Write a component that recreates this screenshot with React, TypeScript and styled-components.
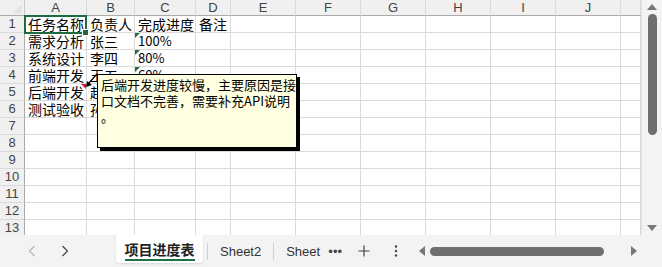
import React from "react";
import styled, { createGlobalStyle } from "styled-components";

const GlobalStyle = createGlobalStyle`
  html, body {
    margin: 0;
    padding: 0;
    background: #ffffff;
  }
  body {
    font-family: "Liberation Sans", "Noto Sans CJK SC", sans-serif;
  }
`;

const COLS = ["A", "B", "C", "D", "E", "F", "G", "H", "I", "J", ""];
const WIDTHS = [25, 62, 48, 61, 35, 65, 65, 65, 65, 65, 65, 20];

const ROWS: string[][] = [
  ["任务名称", "负责人", "完成进度", "备注"],
  ["需求分析", "张三", "100%"],
  ["系统设计", "李四", "80%"],
  ["前端开发", "王五", "60%"],
  ["后端开发", "赵六", "40%"],
  ["测试验收", "孙七", "0%"],
];

const Page = styled.div`
  width: 662px;
  height: 267px;
  display: flex;
  flex-direction: column;
  overflow: hidden;
  background: #f3f3f3;
`;

const Main = styled.div`
  display: flex;
  height: 235px;
  background: #fff;
`;

const SheetWrap = styled.div`
  position: relative;
  width: 641px;
  height: 235px;
  overflow: hidden;
`;

const Sheet = styled.div`
  display: grid;
  grid-template-columns: ${WIDTHS.slice(0, 11).map((w) => w + "px").join(" ")} 20px;
  grid-template-rows: 16px repeat(13, 17px);
`;

const Corner = styled.div`
  position: relative;
  background: #f0f0f0;
  border-right: 1px solid #c8c8c8;
  border-bottom: 1px solid #aaaaaa;
  box-sizing: border-box;

  &::after {
    content: "";
    position: absolute;
    right: 2px;
    bottom: 2px;
    border-left: 9px solid transparent;
    border-bottom: 9px solid #e2e2e2;
  }
`;

const ColHead = styled.div`
  background: #f0f0f0;
  border-right: 1px solid #dadada;
  border-bottom: 1px solid #aaaaaa;
  box-sizing: border-box;
  font-size: 13px;
  line-height: 15px;
  color: #444;
  text-align: center;
`;

const RowHead = styled.div`
  background: #f0f0f0;
  border-right: 1px solid #aaaaaa;
  border-bottom: 1px solid #dadada;
  box-sizing: border-box;
  font-size: 13px;
  line-height: 16px;
  color: #444;
  text-align: center;
`;

const Cell = styled.div<{ $num?: boolean }>`
  position: relative;
  border-right: 1px solid #dadada;
  border-bottom: 1px solid #dadada;
  box-sizing: border-box;
  padding-left: 3px;
  white-space: nowrap;
  overflow: visible;
  font-family: "Noto Sans CJK SC", "Liberation Sans", sans-serif;
  font-size: ${(p) => (p.$num ? "13px" : "14px")};
  line-height: 16px;
  color: #000;
  background: #fff;
`;

const NumberFlag = styled.span`
  position: absolute;
  left: 0;
  top: 0;
  border-top: 5px solid #1e7145;
  border-right: 5px solid transparent;
`;

const CommentFlag = styled.span`
  position: absolute;
  right: 0;
  top: 0;
  border-top: 5px solid #e01b1b;
  border-left: 5px solid transparent;
`;

const Selection = styled.div`
  position: absolute;
  left: 24px;
  top: 15px;
  width: 63px;
  height: 19px;
  border: 2px solid #1e6b41;
  box-sizing: border-box;
  pointer-events: none;

  &::after {
    content: "";
    position: absolute;
    right: -4px;
    bottom: -4px;
    width: 5px;
    height: 5px;
    background: #1e6b41;
    border: 1px solid #fff;
  }
`;

const Comment = styled.div`
  position: absolute;
  left: 97px;
  top: 74px;
  width: 200px;
  height: 74px;
  box-sizing: border-box;
  padding: 2px 0 0 3px;
  background: #ffffe1;
  border: 1px solid #000;
  box-shadow: 3px 3px 0 #000;
  font-family: "Noto Sans CJK SC", sans-serif;
  font-size: 13px;
  line-height: 16px;
  color: #000;
  white-space: nowrap;
`;

const Pointer = styled.svg`
  position: absolute;
  left: 84px;
  top: 72px;
  overflow: visible;
`;

const VScroll = styled.div`
  width: 21px;
  display: flex;
  flex-direction: column;
  align-items: center;
  background: #f3f3f3;
  border-left: 1px solid #e4e4e4;
  box-sizing: border-box;
  padding: 4px 0 4px;
`;

const Arrow = styled.span<{ $dir: "up" | "down" | "left" | "right" }>`
  display: block;
  width: 0;
  height: 0;
  ${(p) =>
    p.$dir === "up"
      ? "border-left: 5px solid transparent; border-right: 5px solid transparent; border-bottom: 6px solid #777;"
      : p.$dir === "down"
      ? "border-left: 5px solid transparent; border-right: 5px solid transparent; border-top: 6px solid #777;"
      : p.$dir === "left"
      ? "border-top: 5px solid transparent; border-bottom: 5px solid transparent; border-right: 6px solid #777;"
      : "border-top: 5px solid transparent; border-bottom: 5px solid transparent; border-left: 6px solid #777;"}
`;

const VThumb = styled.div`
  width: 9px;
  height: 121px;
  margin-top: 4px;
  border-radius: 5px;
  background: #6e6e6e;
`;

const Spacer = styled.div`
  flex: 1;
`;

const TabBar = styled.div`
  height: 32px;
  display: flex;
  align-items: center;
  background: #f3f3f3;
  font-family: "Liberation Sans", "Noto Sans CJK SC", sans-serif;
  font-size: 13px;
  color: #333;
`;

const NavBtn = styled.span`
  width: 33px;
  display: flex;
  justify-content: center;
`;

const NavGroup = styled.div`
  display: flex;
  padding-left: 15px;
  width: 101px;
`;

const ActiveTab = styled.div`
  align-self: flex-start;
  height: 28px;
  width: 87px;
  box-sizing: border-box;
  background: #fff;
  border-radius: 0 0 4px 4px;
  box-shadow: 0 1px 2px rgba(0, 0, 0, 0.12);
  display: flex;
  justify-content: center;
  padding-top: 5px;
`;

const ActiveLabel = styled.span`
  font-family: "Noto Sans CJK SC", sans-serif;
  font-weight: 700;
  font-size: 14px;
  line-height: 18px;
  height: 18px;
  color: #222;
  border-bottom: 2px solid #1e7145;
  padding-bottom: 1px;
`;

const Divider = styled.span`
  width: 1px;
  height: 17px;
  background: #d0d0d0;
`;

const Tab = styled.span`
  padding: 0 12px;
`;

const IconBtn = styled.span<{ $w: number }>`
  width: ${(p) => p.$w}px;
  display: flex;
  justify-content: center;
  color: #444;
`;

const HScroll = styled.div`
  display: flex;
  align-items: center;
  flex: 1;
  padding: 0 25px 0 13px;
`;

const HThumb = styled.div`
  width: 174px;
  height: 9px;
  border-radius: 5px;
  background: #6e6e6e;
  margin-left: 5px;
`;

function Chevron({ left, color }: { left?: boolean; color: string }) {
  return (
    <svg width="8" height="12" viewBox="0 0 8 12">
      <polyline
        points={left ? "6.5,1 1.5,6 6.5,11" : "1.5,1 6.5,6 1.5,11"}
        fill="none"
        stroke={color}
        strokeWidth="1.2"
      />
    </svg>
  );
}

function Grid() {
  const cells: React.ReactNode[] = [<Corner key="corner" />];
  COLS.forEach((c, i) => cells.push(<ColHead key={"h" + i}>{c}</ColHead>));
  for (let r = 0; r < 13; r++) {
    cells.push(<RowHead key={"r" + r}>{r + 1}</RowHead>);
    const data = ROWS[r] || [];
    for (let c = 0; c < 11; c++) {
      const v = data[c];
      const isNum = !!v && v.endsWith("%");
      cells.push(
        <Cell key={r + "-" + c} $num={isNum}>
          {isNum && <NumberFlag />}
          {r === 4 && c === 0 && <CommentFlag />}
          {v}
        </Cell>
      );
    }
  }
  return <Sheet>{cells}</Sheet>;
}

export default function App() {
  return (
    <>
      <GlobalStyle />
      <Page>
        <Main>
          <SheetWrap>
            <Grid />
            <Selection />
            <Pointer width="14" height="16">
              <line x1="13" y1="2" x2="4" y2="12" stroke="#000" strokeWidth="1.2" />
              <polygon points="2,15 3,9 8,13" fill="#000" />
            </Pointer>
            <Comment>
              后端开发进度较慢，主要原因是接
              <br />
              口文档不完善，需要补充API说明
              <br />。
            </Comment>
          </SheetWrap>
          <VScroll>
            <Arrow $dir="up" />
            <VThumb />
            <Spacer />
            <Arrow $dir="down" />
          </VScroll>
        </Main>
        <TabBar>
          <NavGroup>
            <NavBtn>
              <Chevron left color="#b4b4b4" />
            </NavBtn>
            <NavBtn>
              <Chevron color="#444" />
            </NavBtn>
          </NavGroup>
          <ActiveTab>
            <ActiveLabel>项目进度表</ActiveLabel>
          </ActiveTab>
          <Divider style={{ marginLeft: 4 }} />
          <Tab>Sheet2</Tab>
          <Divider />
          <Tab style={{ paddingRight: 8 }}>Sheet</Tab>
          <IconBtn $w={14}>•••</IconBtn>
          <IconBtn $w={44}>
            <svg width="12" height="12" viewBox="0 0 12 12">
              <path d="M6 0.5V11.5M0.5 6H11.5" stroke="#444" strokeWidth="1.2" />
            </svg>
          </IconBtn>
          <IconBtn $w={20}>
            <svg width="4" height="12" viewBox="0 0 4 12">
              <circle cx="2" cy="1.5" r="1.2" fill="#444" />
              <circle cx="2" cy="6" r="1.2" fill="#444" />
              <circle cx="2" cy="10.5" r="1.2" fill="#444" />
            </svg>
          </IconBtn>
          <HScroll>
            <Arrow $dir="left" />
            <HThumb />
            <Spacer />
            <Arrow $dir="right" />
          </HScroll>
        </TabBar>
      </Page>
    </>
  );
}
